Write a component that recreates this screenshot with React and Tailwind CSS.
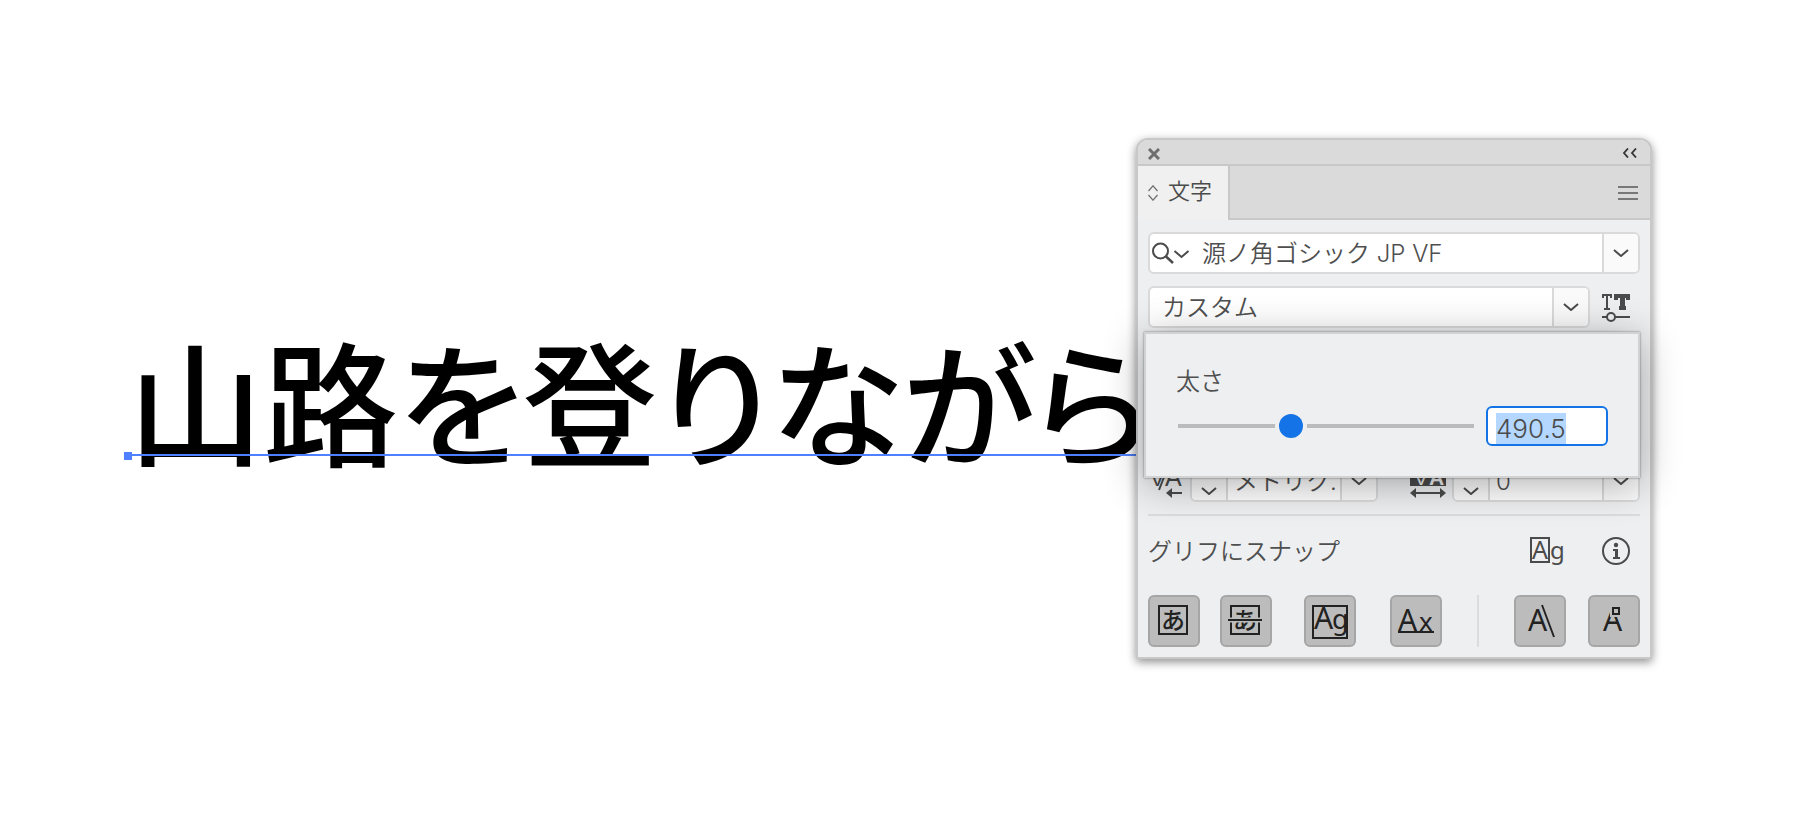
import { useEffect, useRef } from "react";

const Chevron = ({ up = false }) => (
  <svg width="16" height="8" viewBox="0 0 16 8" fill="none" stroke="#4b4b4b" strokeWidth="2" aria-hidden="true">
    <path d={up ? "M1 7l7-6 7 6" : "M1 1l7 6 7-6"} />
  </svg>
);

const field = "flex h-[42px] overflow-hidden rounded-md border-2 border-[#dadada] bg-white";
const arrow = "flex w-9 shrink-0 items-center justify-center border-l-2 border-[#dadada] bg-[#fafafa]";
const stepper = "flex w-9 shrink-0 flex-col items-center justify-center gap-3 border-r-2 border-[#dadada] bg-[#fafafa]";
const textInput = "min-w-0 flex-1 bg-transparent pt-0.5 text-2xl font-[350] text-[#4f4f4f] outline-none";

const snapButtons = [
  {
    label: "仮想ボディ",
    margin: "",
    art: (
      <>
        <rect x="9" y="9" width="28" height="28" fill="none" stroke="#222" strokeWidth="2" />
        <text x="23" y="32" textAnchor="middle" fontSize="24" fontWeight="500" className="font-[Noto_Sans_CJK_JP]">あ</text>
      </>
    ),
  },
  {
    label: "仮想ボディの中央",
    margin: "ml-5",
    art: (
      <>
        <rect x="9" y="9" width="28" height="28" fill="none" stroke="#222" strokeWidth="2" />
        <text x="23" y="32" textAnchor="middle" fontSize="24" fontWeight="500" className="font-[Noto_Sans_CJK_JP]">あ</text>
        <path d="M4 23h38" stroke="#bcbcbc" strokeWidth="5" />
        <path d="M6 23h34" stroke="#222" strokeWidth="2" />
      </>
    ),
  },
  {
    label: "境界線",
    margin: "ml-8",
    art: (
      <>
        <rect x="7" y="9" width="34" height="32" fill="none" stroke="#222" strokeWidth="2" />
        <text x="8" y="32" fontSize="30">A</text>
        <text x="26" y="32" fontSize="27">g</text>
      </>
    ),
  },
  {
    label: "ベースライン",
    margin: "ml-[34px]",
    art: (
      <>
        <text x="6" y="34" fontSize="30">A</text>
        <text x="27" y="34" fontSize="26">x</text>
        <path d="M6 35h36" stroke="#222" strokeWidth="2" />
      </>
    ),
  },
];

const angleButtons = [
  {
    label: "角度のガイド",
    margin: "",
    art: (
      <>
        <text x="12" y="34" fontSize="30">A</text>
        <path d="M26 8l12 32" stroke="#222" strokeWidth="2" />
      </>
    ),
  },
  {
    label: "アンカーポイント",
    margin: "ml-[22px]",
    art: (
      <>
        <text x="13" y="34" fontSize="30">A</text>
        <rect x="20" y="8" width="12" height="12" fill="#bcbcbc" />
        <rect x="23" y="11" width="6" height="6" fill="none" stroke="#222" strokeWidth="2" />
      </>
    ),
  },
];

const SnapButton = ({ label, margin, art }) => (
  <button
    type="button"
    aria-label={label}
    className={`h-[52px] w-[52px] shrink-0 rounded-md border-2 border-[#a6a6a6] bg-[#bcbcbc] ${margin}`}
  >
    <svg width="48" height="48" viewBox="0 0 48 48" fill="#222" className="font-['Noto_Sans']" aria-hidden="true">
      {art}
    </svg>
  </button>
);

function WeightPopup() {
  const ref = useRef(null);
  useEffect(() => {
    ref.current.focus();
    ref.current.select();
  }, []);

  return (
    <div className="absolute top-[110px] right-0 -left-1 z-10 h-[146px] border-2 border-[#d2d2d2] bg-[#eeeff1] px-[30px] pt-7 shadow-[0_0_2px_rgba(0,0,0,0.5),0_6px_38px_rgba(0,0,0,0.32)]">
      <label htmlFor="weight" className="block text-2xl leading-10 font-[350] text-[#4f4f4f]">
        太さ
      </label>
      <div className="mt-1 flex items-center gap-3 pl-0.5">
        <input
          type="range"
          aria-label="太さスライダー"
          min="250"
          max="900"
          step="0.5"
          defaultValue="490.5"
          className="h-10 min-w-0 flex-1 appearance-none bg-transparent outline-none [&::-webkit-slider-runnable-track]:h-1 [&::-webkit-slider-runnable-track]:bg-[#b9bbbc] [&::-webkit-slider-thumb]:-mt-2.5 [&::-webkit-slider-thumb]:h-6 [&::-webkit-slider-thumb]:w-6 [&::-webkit-slider-thumb]:appearance-none [&::-webkit-slider-thumb]:rounded-full [&::-webkit-slider-thumb]:bg-[#1473e6] [&::-webkit-slider-thumb]:shadow-[0_0_0_4px_#eeeff1]"
        />
        <input
          ref={ref}
          id="weight"
          type="text"
          defaultValue="490.5"
          className="h-10 w-[122px] rounded-md border-2 border-[#1473e6] bg-white px-2 pt-1 text-[26px] font-light text-[#4b4b4b] outline-none selection:bg-[#b3d7ff] selection:text-[#4b4b4b]"
        />
      </div>
    </div>
  );
}

function CharacterPanel() {
  return (
    <section
      aria-label="文字"
      className="absolute top-[138px] left-[1136px] w-[516px] overflow-visible rounded-t-xl border-2 border-[#c8c8c8] bg-[#eeeff1] text-[#4b4b4b] shadow-[0_3px_10px_rgba(0,0,0,0.45)]"
    >
      <header className="flex h-[26px] items-center justify-between rounded-t-[10px] border-b-2 border-[#c8c8c8] bg-[#dadada] px-2.5 pt-1">
        <button type="button" aria-label="閉じる">
          <svg width="12" height="12" viewBox="0 0 12 12" stroke="#6e6e6e" strokeWidth="3" aria-hidden="true">
            <path d="M1 1l10 10M11 1L1 11" />
          </svg>
        </button>
        <button type="button" aria-label="アイコンパネル化" className="pr-0.5 pb-0.5">
          <svg width="16" height="10" viewBox="0 0 16 10" fill="none" stroke="#333" strokeWidth="1.8" aria-hidden="true">
            <path d="M6 .5L2 5l4 4.500M14 .5L10 5l4 4.500" />
          </svg>
        </button>
      </header>

      <div className="flex h-[54px] bg-[#dadada]">
        <button type="button" className="flex w-[92px] items-center gap-2.5 border-r-2 border-[#c8c8c8] bg-[#f0f0f0] pl-2.5 text-[22px] font-[350]">
          <svg width="10" height="16" viewBox="0 0 10 16" fill="none" stroke="#6e6e6e" strokeWidth="1.2" aria-hidden="true">
            <path d="M.5 6L5 .8 9.500 6M.5 10L5 15.200 9.500 10" />
          </svg>
          <span className="pb-1 whitespace-nowrap">文字</span>
        </button>
        <div className="flex flex-1 items-center justify-end border-b-2 border-[#c8c8c8] pt-0.5 pr-3">
          <button type="button" aria-label="パネルメニュー">
            <svg width="20" height="14" viewBox="0 0 20 14" stroke="#787878" strokeWidth="2" aria-hidden="true">
              <path d="M0 1h20M0 7h20M0 13h20" />
            </svg>
          </button>
        </div>
      </div>

      <div className="px-2.5 pt-3 pb-2.5">
        <div className={field}>
          <button type="button" aria-label="フォント検索" className="flex w-[52px] shrink-0 items-center pl-0.5">
            <svg width="38" height="24" viewBox="0 0 38 24" fill="none" stroke="#4b4b4b" strokeWidth="2" aria-hidden="true">
              <circle cx="8.500" cy="10" r="7.500" />
              <path d="M14 15.500l7 6.500" strokeWidth="2.500" />
              <path d="M22.500 10l7 6 7-6" />
            </svg>
          </button>
          <input type="text" aria-label="フォント" defaultValue="源ノ角ゴシック JP VF" className={textInput} />
          <button type="button" aria-label="フォント一覧" className={arrow}><Chevron /></button>
        </div>

        <div className="relative mt-3 flex items-center">
          <div className={`${field} w-[442px]`}>
            <input type="text" aria-label="スタイル" defaultValue="カスタム" className={`${textInput} pl-3`} />
            <button type="button" aria-label="スタイル一覧" className={arrow}><Chevron /></button>
          </div>
          <button type="button" aria-label="バリアブルフォント" className="mt-0.5 ml-3">
            <svg width="28" height="30" viewBox="0 0 28 30" fill="none" stroke="#4b4b4b" aria-hidden="true">
              <path d="M1 5V2h8v3M5 2v14M2 16h6" strokeWidth="2" />
              <path d="M14 7V3h12v4M17 15h7" strokeWidth="4" />
              <path d="M20.500 3v14" strokeWidth="5" />
              <path d="M0 24h5M13 24h15" strokeWidth="2" />
              <circle cx="9" cy="24" r="4" strokeWidth="2" />
            </svg>
          </button>
        </div>

        <div className="mt-[132px] flex items-center justify-between">
          <div className="flex">
            <svg width="42" height="42" viewBox="0 0 42 42" fill="#4b4b4b" className="font-['Liberation_Sans']" aria-hidden="true">
              <text x="2" y="26" fontSize="22">V</text>
              <text x="17" y="26" fontSize="25">A</text>
              <path d="M11 30l7-18M23 33h11" stroke="#4b4b4b" strokeWidth="2" />
              <path d="M18 33l6-5v10z" />
            </svg>
            <div className={`${field} w-[188px]`}>
              <button type="button" aria-label="カーニング増減" className={stepper}><Chevron up /><Chevron /></button>
              <input type="text" aria-label="カーニング" defaultValue="メトリク." className={`${textInput} pl-1.5`} />
              <button type="button" aria-label="カーニング一覧" className={arrow}><Chevron /></button>
            </div>
          </div>
          <div className="flex">
            <svg width="42" height="42" viewBox="0 0 42 42" fill="#4b4b4b" className="font-['Liberation_Sans']" aria-hidden="true">
              <path d="M0 4h36v22H0zM0 33l6-5v10zM36 33l-6-5v10z" />
              <path d="M4 33h28" stroke="#4b4b4b" strokeWidth="2" />
              <text x="4" y="25" fontSize="21" fill="#eee">V</text>
              <text x="19" y="25" fontSize="21" fill="#eee" fontWeight="bold">A</text>
            </svg>
            <div className={`${field} w-[188px]`}>
              <button type="button" aria-label="トラッキング増減" className={stepper}><Chevron up /><Chevron /></button>
              <input type="text" aria-label="トラッキング" defaultValue="0" className={`${textInput} pl-1.5`} />
              <button type="button" aria-label="トラッキング一覧" className={arrow}><Chevron /></button>
            </div>
          </div>
        </div>

        <hr className="mt-3 border-t-2 border-[#dcdcdc]" />

        <div className="mt-4 flex h-10 items-center">
          <h2 className="flex-1 text-2xl font-[350] text-[#4f4f4f]">グリフにスナップ</h2>
          <button type="button" aria-label="グリフにスナップを表示">
            <svg width="34" height="32" viewBox="0 0 34 32" fill="#4b4b4b" className="font-['Noto_Sans']" aria-hidden="true">
              <rect x="1" y="2" width="18" height="24" fill="none" stroke="#4b4b4b" strokeWidth="2" />
              <text x="2" y="23" fontSize="25">A</text>
              <text x="20" y="23" fontSize="24">g</text>
            </svg>
          </button>
          <button type="button" aria-label="情報" className="mr-2.5 ml-[38px] pb-0.5">
            <svg width="28" height="28" viewBox="0 0 28 28" fill="#4b4b4b" aria-hidden="true">
              <circle cx="14" cy="14" r="13" fill="none" stroke="#4b4b4b" strokeWidth="2" />
              <circle cx="14" cy="8" r="2.200" />
              <path d="M11 12h5v8h2v2h-7v-2h2v-6h-2z" />
            </svg>
          </button>
        </div>

        <div className="mt-[23px] flex items-center">
          {snapButtons.map((b) => <SnapButton key={b.label} {...b} />)}
          <div className="mr-[35px] ml-auto h-[52px] w-0.5 bg-[#dcdcdc]" />
          {angleButtons.map((b) => <SnapButton key={b.label} {...b} />)}
        </div>
      </div>

      <div className="absolute inset-x-2.5 top-[82px]">
        <WeightPopup />
      </div>
    </section>
  );
}

export default function App() {
  return (
    <main className="relative min-h-screen overflow-hidden bg-white font-['Inter','Noto_Sans_CJK_JP',sans-serif]">
      <div className="absolute top-[300px] left-32 font-['Noto_Sans_CJK_JP',sans-serif]">
        <h1 className="text-[135px] leading-[196px] font-medium whitespace-nowrap text-black [font-feature-settings:'palt']">
          山路を登りながら
        </h1>
        <div className="absolute inset-x-0 top-[154px] h-0.5 bg-[#4f80ff]" />
        <div className="absolute top-[152px] -left-1 h-2 w-2 bg-[#4f80ff]" />
      </div>
      <CharacterPanel />
    </main>
  );
}
